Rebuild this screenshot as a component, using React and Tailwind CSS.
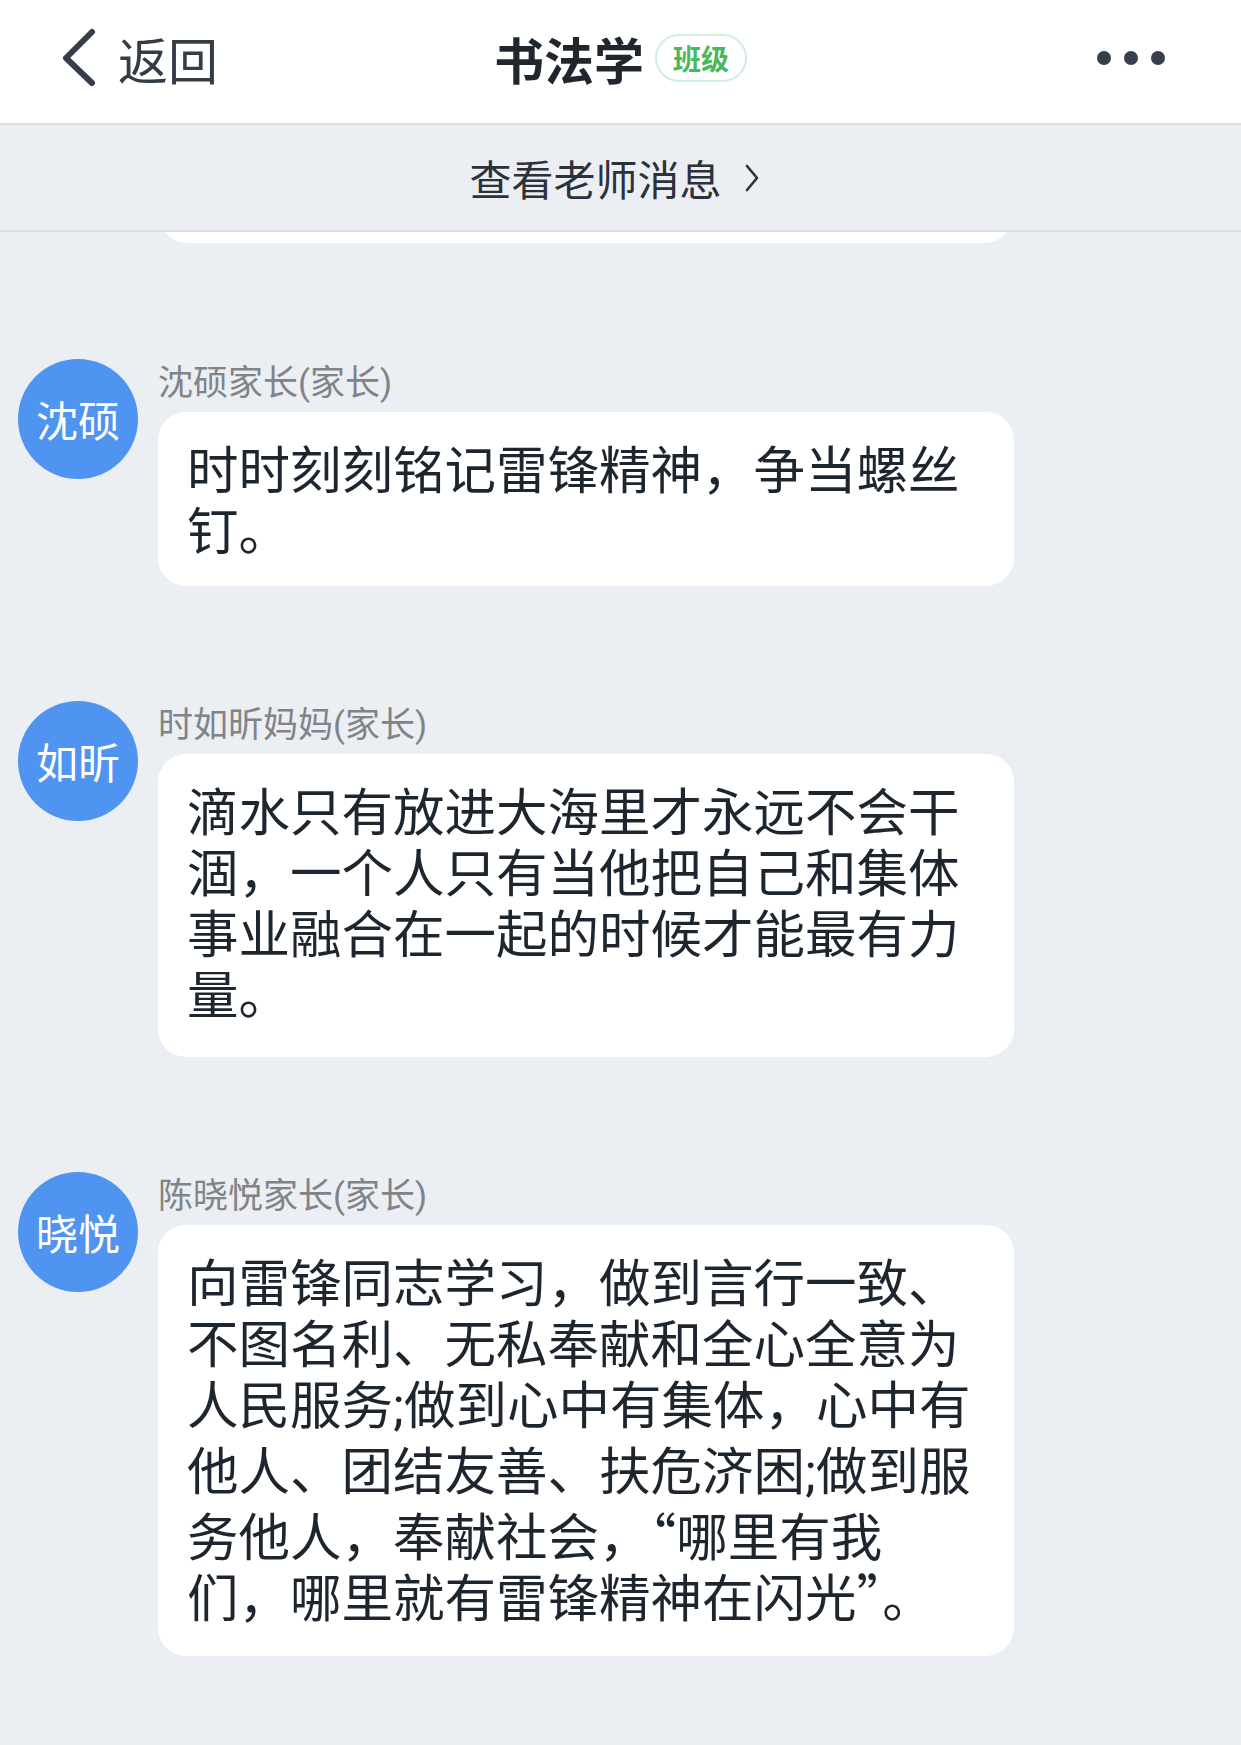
import React from "react";

const FONT = { fontFamily: '"Noto Sans CJK SC", Roboto, sans-serif' };

function Semi() {
  return <span style={{ fontFamily: "Roboto, sans-serif" }}>;</span>;
}

function Paren({ children }) {
  return <span style={{ fontFamily: "Roboto, sans-serif" }}>{children}</span>;
}

const messages = [
  {
    avatar: "沈硕",
    name: "沈硕家长",
    pb: "pb-[28px]",
    lines: ["时时刻刻铭记雷锋精神，争当螺丝", "钉。"],
  },
  {
    avatar: "如昕",
    name: "时如昕妈妈",
    pb: "pb-[35px]",
    lines: [
      "滴水只有放进大海里才永远不会干",
      "涸，一个人只有当他把自己和集体",
      "事业融合在一起的时候才能最有力",
      "量。",
    ],
  },
  {
    avatar: "晓悦",
    name: "陈晓悦家长",
    pb: "pb-[31px]",
    lines: [
      "向雷锋同志学习，做到言行一致、",
      "不图名利、无私奉献和全心全意为",
      <>人民服务<Semi />做到心中有集体，心中有</>,
      <>他人、团结友善、扶危济困<Semi />做到服</>,
      "务他人，奉献社会，“哪里有我",
      "们，哪里就有雷锋精神在闪光”。",
    ],
  },
];

function Message({ m }) {
  return (
    <div className="flex pl-[18px] mt-[115px]">
      <div className="w-[120px] h-[120px] shrink-0 rounded-full bg-[#4f94f0] flex items-center justify-center text-white text-[42px] leading-none">
        {m.avatar}
      </div>
      <div className="ml-[20px] w-[856px] flex flex-col">
        <div className="h-[42px] overflow-visible text-[35px] leading-[42px] text-[#808387] whitespace-nowrap">
          {m.name}
          <Paren>(</Paren>家长<Paren>)</Paren>
        </div>
        <div
          className={
            "mt-[11px] bg-white rounded-[28px] pl-[29px] pr-[27px] pt-[24px] text-[51.5px] leading-[61px] text-[#1d252e] whitespace-nowrap " +
            m.pb
          }
        >
          {m.lines.map((l, i) => (
            <div key={i}>{l}</div>
          ))}
        </div>
      </div>
    </div>
  );
}

export default function App() {
  return (
    <div className="min-h-[1745px] w-[1241px] bg-[#ebeef2] overflow-hidden" style={FONT}>
      {/* Header */}
      <div className="h-[125px] bg-white border-b-2 border-[#dfe1e4] grid grid-cols-[1fr_auto_1fr] items-center pb-[7px]">
        <div className="flex items-center pl-[60px]">
          <svg width="40" height="60" viewBox="0 0 40 60" fill="none">
            <polyline
              points="32,4 6,30 32,55"
              stroke="#343d48"
              strokeWidth="6"
              strokeLinecap="round"
              strokeLinejoin="round"
            />
          </svg>
          <span className="ml-[18px] text-[50px] leading-none text-[#343c47]">返回</span>
        </div>
        <div className="flex items-center">
          <span className="text-[50px] leading-none font-bold text-[#1f262e]">书法学</span>
          <span className="ml-[11px] w-[92px] h-[48px] rounded-full border-2 border-[#d3eed9] flex items-center justify-center text-[28px] leading-none font-bold text-[#47b85c]">
            班级
          </span>
        </div>
        <div className="flex items-center justify-end pr-[76px] gap-[13px]">
          <div className="w-[14px] h-[14px] rounded-full bg-[#363f4b]" />
          <div className="w-[14px] h-[14px] rounded-full bg-[#363f4b]" />
          <div className="w-[14px] h-[14px] rounded-full bg-[#363f4b]" />
        </div>
      </div>

      {/* Sub bar */}
      <div className="h-[107px] bg-[#ebeef2] border-b-2 border-[#dcdfe3] flex items-center justify-center pr-[12px]">
        <span className="text-[42px] leading-none text-[#2b323a]">查看老师消息</span>
        <svg className="ml-[22px]" width="16" height="28" viewBox="0 0 16 28" fill="none">
          <polyline
            points="3,2 13,14 3,26"
            stroke="#2b323a"
            strokeWidth="2.6"
            strokeLinecap="round"
            strokeLinejoin="round"
          />
        </svg>
      </div>

      {/* Partial previous bubble */}
      <div className="ml-[158px] w-[856px] h-[11px] overflow-hidden">
        <div className="h-[60px] -mt-[49px] bg-white rounded-[30px]" />
      </div>

      <div className="pt-px">
        {messages.map((m, i) => (
          <Message key={i} m={m} />
        ))}
      </div>
    </div>
  );
}
